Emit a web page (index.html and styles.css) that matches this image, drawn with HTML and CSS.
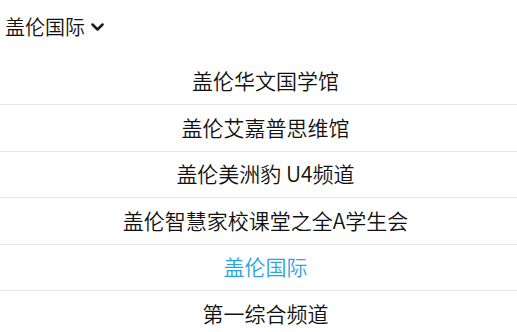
FILE: index.html
```html
<!DOCTYPE html>
<html lang="zh-CN">
<head>
<meta charset="utf-8">
<link rel="stylesheet" href="styles.css">
</head>
<body>
<div class="header">
  <span class="title">盖伦国际</span>
  <svg class="chev" width="13" height="9" viewBox="0 0 13 9"><path d="M1.5 1.5 L6.5 6.5 L11.5 1.5" fill="none" stroke="#1a1a1a" stroke-width="2.5" stroke-linecap="round" stroke-linejoin="round"/></svg>
</div>
<ul class="list">
  <li class="item">盖伦华文国学馆</li>
  <li class="item">盖伦艾嘉普思维馆</li>
  <li class="item">盖伦美洲豹 U4频道</li>
  <li class="item">盖伦智慧家校课堂之全A学生会</li>
  <li class="item active">盖伦国际</li>
  <li class="item">第一综合频道</li>
</ul>
</body>
</html>
```
FILE: styles.css
```css
html, body {
  margin: 0;
  padding: 0;
  background: #fff;
  font-family: "Noto Sans CJK SC", "Noto Sans", sans-serif;
  color: #111;
}
.header {
  height: 58.5px;
  box-sizing: border-box;
  display: flex;
  align-items: center;
  padding: 0 0 4px 5px;
  gap: 6px;
}
.title {
  font-size: 20px;
  line-height: 1;
  font-weight: 350;
}
.chev {
  display: block;
  margin-top: 1px;
}
.list {
  list-style: none;
  margin: 0;
  padding: 0;
}
.item {
  height: 46.5px;
  box-sizing: border-box;
  border-bottom: 1px solid #e6e6e6;
  display: flex;
  align-items: center;
  justify-content: center;
  padding: 0 0 1px 14px;
  font-size: 21px;
  line-height: 1;
  font-weight: 350;
}
.item.active {
  color: #2aa6de;
}
```
